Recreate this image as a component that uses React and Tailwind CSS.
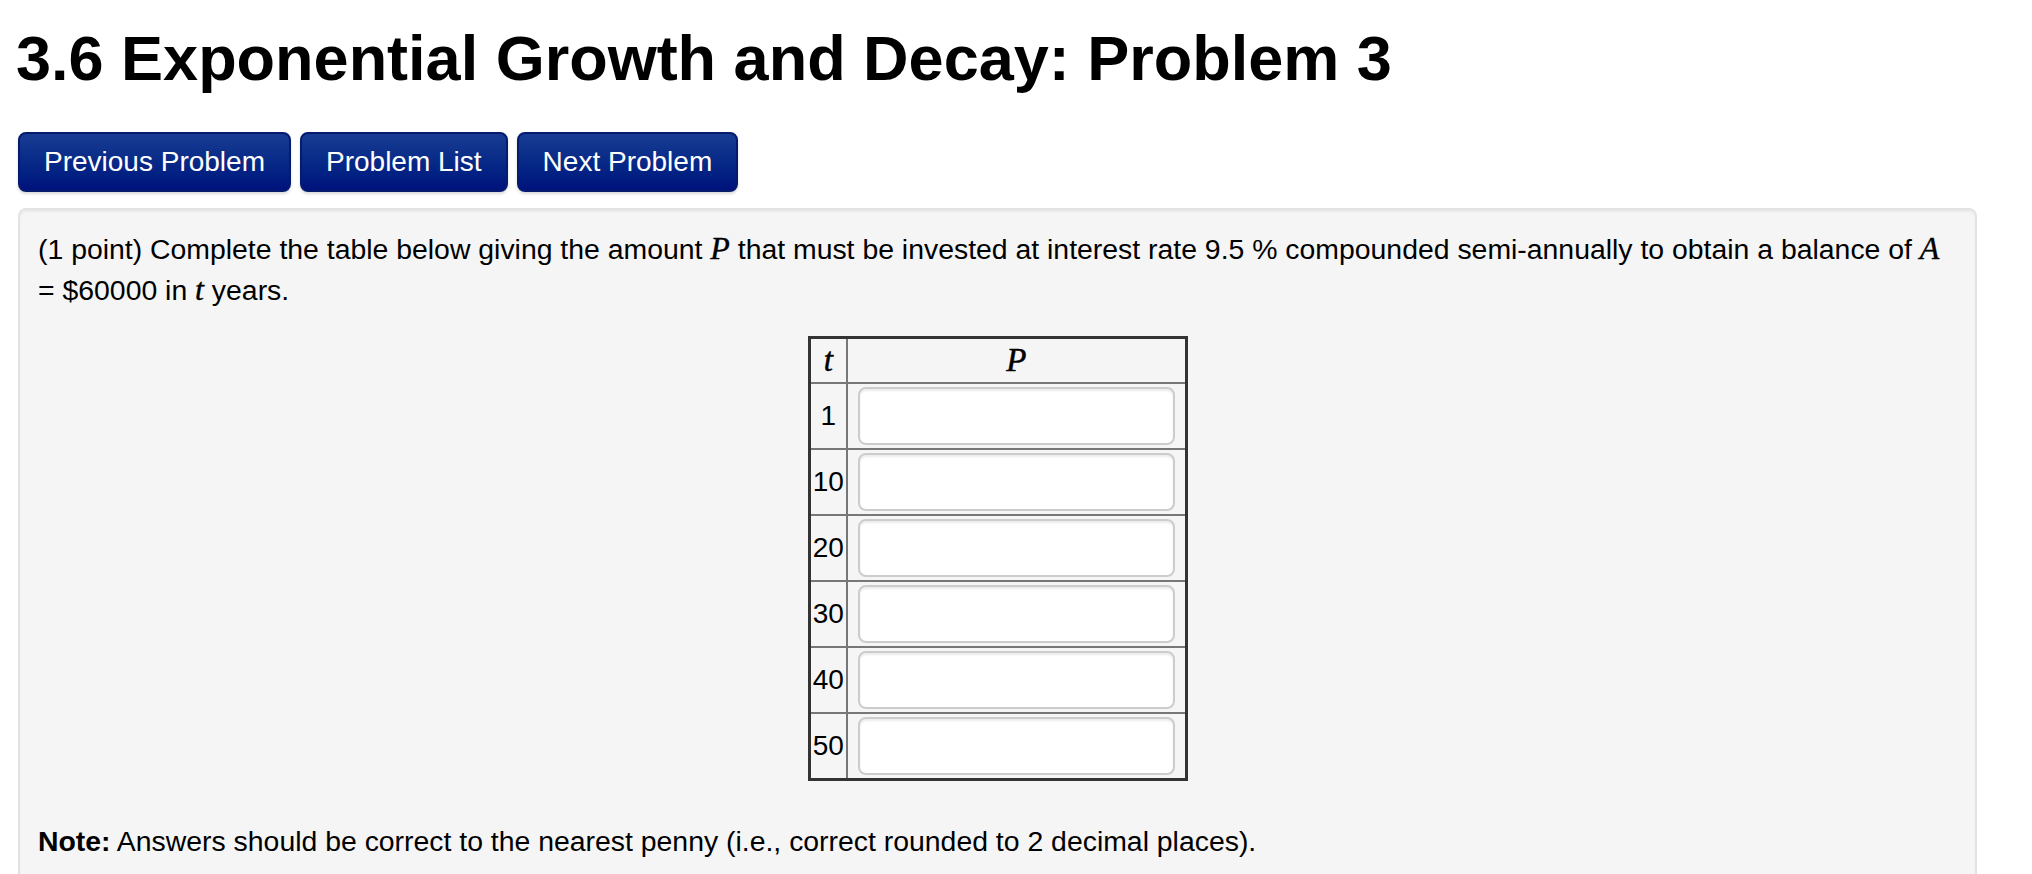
import React from "react";

const ROWS = [1, 10, 20, 30, 40, 50];

const BUTTONS = ["Previous Problem", "Problem List", "Next Problem"];

function MathVar({ children }) {
  return (
    <span className="font-['Liberation_Serif',serif] text-[32px] italic [-webkit-text-stroke:0.4px_black]">
      {children}
    </span>
  );
}

export default function App() {
  return (
    <div className="min-h-screen bg-white pl-[18px] font-['Liberation_Sans',Arial,sans-serif] text-black">
      <h1 className="-ml-[2px] pt-[18px] text-[63px] font-bold leading-[80px]">
        3.6 Exponential Growth and Decay: Problem 3
      </h1>

      <div className="mt-[34px] flex gap-[9px]">
        {BUTTONS.map((label) => (
          <button
            key={label}
            className="h-[60px] rounded-[8px] border-2 border-[#061a6e] bg-gradient-to-b from-[#183c92] to-[#00117c] px-[24px] text-[28px] text-white shadow-[0_2px_3px_rgba(0,0,0,0.15)]"
          >
            {label}
          </button>
        ))}
      </div>

      <div className="mt-[16px] w-[1959px] rounded-[8px] border-2 border-[#e3e3e3] bg-[#f5f5f5] px-[18px] pt-[18px] pb-[40px] text-[28.4px] leading-[40px] shadow-[inset_0_2px_2px_rgba(0,0,0,0.05)]">
        <p>
          <span className="whitespace-nowrap">
            (1 point) Complete the table below giving the amount <MathVar>P</MathVar> that must be
            invested at interest rate 9.5 % compounded semi-annually to obtain a balance of{" "}
            <MathVar>A</MathVar>
          </span>
          <br />= $60000 in <MathVar>t</MathVar> years.
        </p>

        <table className="mx-auto mt-[26px] w-[380px] border-collapse border-[3px] border-[#333]">
          <thead>
            <tr className="h-[45px]">
              <th className="w-[38px] border-2 border-[#777] p-0 text-center font-['Liberation_Serif',serif] text-[33px] font-normal italic [-webkit-text-stroke:0.5px_black]">
                t
              </th>
              <th className="border-2 border-[#777] p-0 text-center font-['Liberation_Serif',serif] text-[33px] font-normal italic [-webkit-text-stroke:0.5px_black]">
                P
              </th>
            </tr>
          </thead>
          <tbody>
            {ROWS.map((t) => (
              <tr key={t} className="h-[66px]">
                <td className="border-2 border-[#777] p-0 text-center text-[28px]">{t}</td>
                <td className="border-2 border-[#777] px-[10px] py-[3px]">
                  <input
                    type="text"
                    className="block h-[58px] w-full rounded-[8px] border-2 border-[#cccccc] bg-white shadow-[inset_0_2px_2px_rgba(0,0,0,0.075)] outline-none"
                  />
                </td>
              </tr>
            ))}
          </tbody>
        </table>

        <p className="mt-[40px]">
          <b>Note:</b> Answers should be correct to the nearest penny (i.e., correct rounded to 2
          decimal places).
        </p>
      </div>
    </div>
  );
}
